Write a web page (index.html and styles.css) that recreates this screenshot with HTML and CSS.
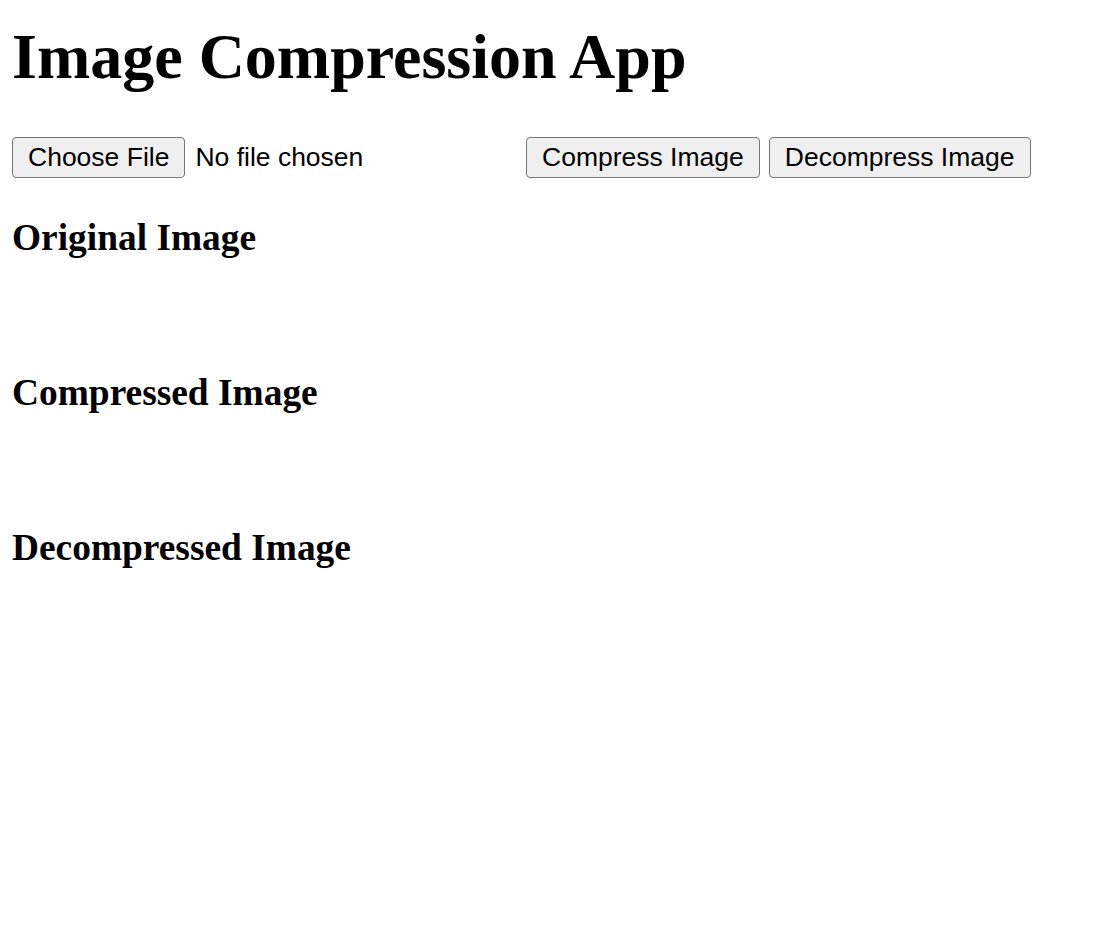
FILE: index.html
```html
<!DOCTYPE html>
<html lang="en">
<head>
  <meta charset="UTF-8">
  <title>Image Compression App</title>
  <link rel="stylesheet" href="styles.css">
</head>
<body>
  <h1>Image Compression App</h1>

  <!-- Upload and actions -->
  <div class="controls">
    <input type="file" id="file-input" accept="image/*">
    <button id="compress-btn">Compress Image</button>
    <button id="decompress-btn">Decompress Image</button>
  </div>

  <div class="section">
    <h2>Original Image</h2>
    <div class="preview" id="original"></div>
  </div>

  <div class="section">
    <h2>Compressed Image</h2>
    <div class="preview" id="compressed"></div>
  </div>

  <div class="section">
    <h2>Decompressed Image</h2>
    <div class="preview" id="decompressed"></div>
  </div>
</body>
</html>
```

FILE: styles.css
```css
body {
  margin: 0;
  padding: 12px;
  font-family: "Liberation Serif", "Times New Roman", serif;
  color: #000;
  background: #fff;
}
h1 {
  font-size: 64px;
  line-height: 74px;
  margin: 8px 0 43px;
}
.controls {
  display: flex;
  align-items: center;
  gap: 9px;
  margin-bottom: 38px;
}
.controls input[type="file"],
.controls button {
  font-family: "Liberation Sans", Arial, sans-serif;
  font-size: 26.5px;
  color: #000;
}
#file-input {
  width: 505px;
}
#file-input::file-selector-button,
.controls button {
  height: 41px;
  padding: 0 15px;
  background: #efefef;
  border: 1.5px solid #767676;
  border-radius: 4px;
  font-family: "Liberation Sans", Arial, sans-serif;
  font-size: 26.5px;
  color: #000;
  cursor: pointer;
}
#file-input::file-selector-button {
  margin-right: 10px;
}
.section h2 {
  font-size: 37.4px;
  line-height: 43px;
  margin: 0;
}
.preview {
  height: 112px;
}
```
